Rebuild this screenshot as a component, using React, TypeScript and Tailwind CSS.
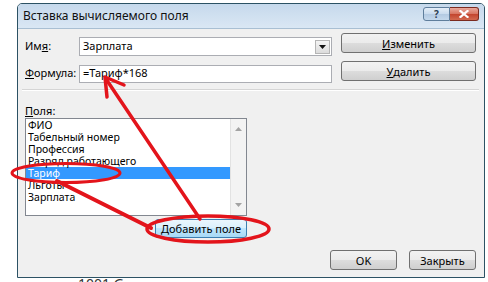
import type { ReactNode } from "react";

const fields = [
  "ФИО",
  "Табельный номер",
  "Профессия",
  "Разряд работающего",
  "Тариф",
  "Льготы",
  "Зарплата",
];

// Win7-style push button
const WinButton = ({
  children,
  className = "",
  hot = false,
}: {
  children: ReactNode;
  className?: string;
  hot?: boolean;
}) => (
  <div
    className={`flex items-center justify-center rounded-[3px] border leading-none ${
      hot
        ? "border-[#3c7fb1] bg-[linear-gradient(#eaf6fd_0%,#d9f0fc_50%,#bee6fd_50%,#a7d9f5_100%)]"
        : "border-[#707070] bg-[linear-gradient(#f2f2f2_0%,#ebebeb_50%,#dddddd_50%,#cfcfcf_100%)]"
    } ${className}`}
  >
    {children}
  </div>
);

const App = () => {
  return (
    <div className="relative h-[282px] w-[488px] overflow-hidden bg-white font-['Noto_Sans','Open_Sans',sans-serif] text-[11px] text-black">
      <div className="ml-[17px] mt-[3px] flex h-[275px] w-[468px] flex-col rounded-t-[5px] border border-[#2c5264] bg-[#f0f0f0]">
        {/* title bar */}
        <div className="flex h-[25px] items-start justify-between rounded-t-[4px] border-b border-[#a9bfd3] bg-[linear-gradient(#c6d9ec,#dae7f4)] pl-[5px] pr-[5px]">
          <span className="mt-[4px] text-[12px] leading-[15px] text-[#111]">
            Вставка вычисляемого поля
          </span>
          <div className="mt-[3px] flex">
            <div className="flex h-[14px] w-[27px] items-center justify-center rounded-l-[3px] border border-[#5f7e9c] bg-[linear-gradient(#e4eef8_0%,#c9dbee_50%,#b2c9e2_50%,#c4d8ec_100%)] text-[10px] font-bold leading-none text-[#2b3d52]">
              ?
            </div>
            <div className="flex h-[14px] w-[29px] items-center justify-center rounded-r-[3px] border border-l-0 border-[#7a2b20] bg-[linear-gradient(#e9a99c_0%,#d7735f_50%,#c2432d_50%,#d2694f_100%)]">
              <svg width="10" height="8" viewBox="0 0 10 8">
                <path
                  d="M1.5 1 L8.5 7 M8.5 1 L1.5 7"
                  stroke="white"
                  strokeWidth="2.2"
                  strokeLinecap="square"
                />
              </svg>
            </div>
          </div>
        </div>

        {/* name / formula */}
        <div className="flex h-[60px]">
          <div className="grid grid-cols-[54px_253px] gap-y-[2px] pl-[7px] pt-[8px]">
            <div className="flex h-[19px] items-center">
              Им<span className="underline">я</span>:
            </div>
            <div className="flex h-[19px] items-center border border-[#abadb3] bg-white pl-[3px]">
              <span className="flex-1">Зарплата</span>
              <div className="mr-[1px] flex h-[14px] w-[15px] items-center justify-center border border-[#b5b5b5] bg-[linear-gradient(#f4f4f4,#dcdcdc)]">
                <svg width="7" height="4" viewBox="0 0 7 4">
                  <path d="M0 0 L7 0 L3.5 4 Z" fill="#111" />
                </svg>
              </div>
            </div>
            <div className="flex h-[18px] items-center">
              <span className="underline">Ф</span>ормула:
            </div>
            <div className="flex h-[18px] items-center border border-[#abadb3] bg-white pl-[3px]">
              =Тариф*168
            </div>
          </div>
          <div className="ml-[9px] flex w-[135px] flex-col gap-[8px] pt-[4px]">
            <WinButton className="h-[20px]">
              <span className="underline">И</span>зменить
            </WinButton>
            <WinButton className="h-[20px]">
              <span className="underline">У</span>далить
            </WinButton>
          </div>
        </div>

        {/* etched separator */}
        <div className="ml-[4px] w-[457px] border-b border-t border-b-white border-t-[#d5d5d5]" />

        <div className="ml-[7px] mt-[13px] h-[13px] leading-[13px]">
          <span className="underline">П</span>оля:
        </div>

        {/* list box */}
        <div className="ml-[7px] mt-[1px] flex h-[98px] w-[222px] border border-[#828790] bg-white">
          <div className="flex-1">
            {fields.map((f) => (
              <div
                key={f}
                className={`h-[12px] pl-[2px] text-[10.5px] leading-[12px] ${
                  f === "Тариф" ? "bg-[#3399ff] text-white" : ""
                }`}
              >
                {f}
              </div>
            ))}
          </div>
          <div className="flex w-[16px] flex-col items-center justify-between border-l border-[#e2e2e2] bg-[#f3f3f3] py-[8px]">
            <svg width="7" height="4" viewBox="0 0 7 4">
              <path d="M0 4 L7 4 L3.5 0 Z" fill="#a3a3a3" />
            </svg>
            <svg width="7" height="4" viewBox="0 0 7 4">
              <path d="M0 0 L7 0 L3.5 4 Z" fill="#a3a3a3" />
            </svg>
          </div>
        </div>

        <WinButton hot className="ml-[137px] mt-[3px] h-[19px] w-[92px]">
          Добавить поле
        </WinButton>

        <div className="mt-[12px] flex justify-end gap-[12px] pr-[8px]">
          <WinButton className="h-[20px] w-[67px]">OK</WinButton>
          <WinButton className="h-[20px] w-[67px]">Закрыть</WinButton>
        </div>
      </div>

      <div className="-mt-[1px] pl-[78px] text-[14px] leading-[14px] text-[#333]">
        1001 G
      </div>

      {/* red annotations */}
      <svg
        className="pointer-events-none absolute inset-0"
        width="488"
        height="282"
        viewBox="0 0 488 282"
      >
        <g
          fill="none"
          stroke="#e3141b"
          strokeLinecap="round"
          strokeLinejoin="round"
        >
          <ellipse cx="66" cy="173" rx="54" ry="9.5" strokeWidth="3" />
          <ellipse cx="208" cy="229" rx="61" ry="13" strokeWidth="3.5" />
          <line x1="200" y1="219" x2="106" y2="79" strokeWidth="3.5" />
          <polyline points="124,85 105,77 107,97" strokeWidth="3.5" />
          <line x1="57" y1="181" x2="151" y2="228" strokeWidth="4" />
        </g>
      </svg>
    </div>
  );
};

export default App;
